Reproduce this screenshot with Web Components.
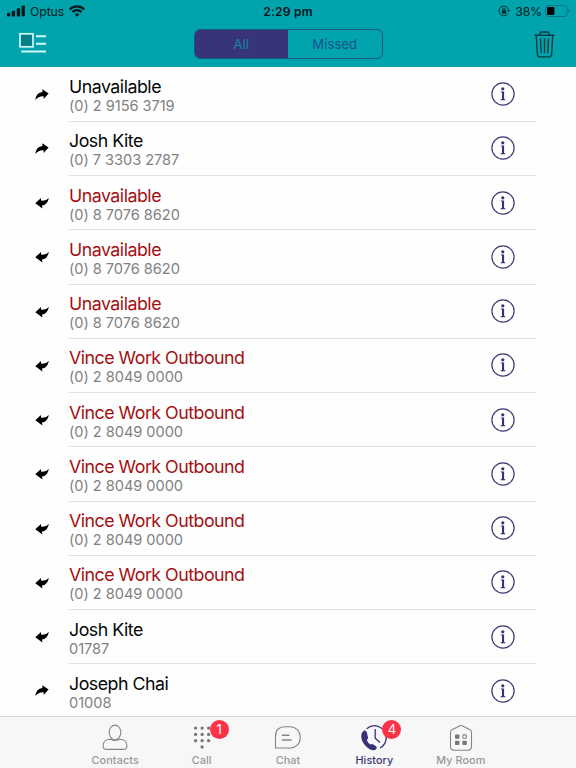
<!DOCTYPE html>
<html lang="en">
<head>
<meta charset="utf-8">
<title>Call history</title>
<style>
html, body { margin: 0; height: 100%; }
body { font-family: Inter, "Liberation Sans", sans-serif; background: #fefefe; overflow: hidden; }
</style>
</head>
<body>
<history-app></history-app>
<script>
const define = (name, render) => customElements.define(name, class extends HTMLElement {
  connectedCallback() {
    if (this.shadowRoot) return;
    this.attachShadow({ mode: 'open' }).innerHTML = render(this);
  }
});

define('status-bar', () => `<style>
:host { display: grid; grid-template-columns: 1fr auto 1fr; align-items: center; height: 22px; color: #001d22; }
.l, .r { display: flex; align-items: center; }
.l { padding-left: 7px; font-size: 12.2px; }
.l span { margin: 0 5px 0 5px; letter-spacing: -.05px; }
.t { font-size: 12px; font-weight: 600; color: #001418; letter-spacing: .25px; }
.r { justify-content: flex-end; padding-right: 6px; font-size: 12.2px; }
.r span { margin: 0 3px 0 5px; letter-spacing: -.1px; }
svg { display: block; }
</style>
<div class="l"><svg width="18" height="12" fill="#00171b"><rect x="0" y="7.8" width="3.3" height="3.7" rx="1"/><rect x="4.8" y="5.7" width="3.3" height="5.8" rx="1"/><rect x="9.8" y="3.2" width="3.3" height="8.3" rx="1"/><rect x="14.6" y=".5" width="3.3" height="11" rx="1"/></svg>
<span>Optus</span>
<svg width="16" height="12" viewBox="0 0 16 12" fill="none" stroke="#00171b" stroke-width="2.1"><path d="M.8 4.4a10.2 10.2 0 0 1 14.4 0M3.4 7a6.5 6.5 0 0 1 9.2 0"/><path d="M8 11.7 5.8 9.4a3.1 3.1 0 0 1 4.4 0z" fill="#00171b" stroke="none"/></svg></div>
<div class="t">2:29 pm</div>
<div class="r"><svg width="12" height="12" viewBox="0 0 12 12" fill="none" stroke="#003036" stroke-width="1"><path d="M1.1 7.2A4.8 4.8 0 0 1 10.6 4.8M10 8.6A4.8 4.8 0 0 1 1.6 8.2"/><path d="M9 5.2h3l-1.5 2z" fill="#003036" stroke="none"/><rect x="3.9" y="5.4" width="4.2" height="3.2" fill="#001d22" stroke="none"/><path d="M4.8 5.5V4.3a1.2 1.2 0 0 1 2.4 0v1.2"/></svg>
<span>38%</span>
<svg width="25" height="12" viewBox="0 0 25 12"><rect x=".5" y=".5" width="21.6" height="11" rx="3" fill="none" stroke="#077780"/><rect x="2" y="2" width="7.4" height="8" rx="1.2" fill="#000"/><path d="M23.4 4v4q1.4-.5 1.4-2t-1.4-2z" fill="#077780"/></svg></div>`);

define('segment-control', () => `<style>
:host { display: grid; grid-template-columns: 1fr 1fr; width: 189px; height: 30px; box-sizing: border-box; border: 1.3px solid #17588b; border-radius: 6px; overflow: hidden; }
::slotted(span) { display: flex; align-items: center; justify-content: center; color: #17548f; font-size: 13px; letter-spacing: .12px; }
::slotted(.on) { background: #373478; color: #1687a4; }
</style><slot></slot>`);

define('nav-header', () => `<style>
:host { display: flex; flex-direction: column; height: 67px; box-sizing: border-box; background: #01a3ad; border-bottom: 1px solid #0798a2; }
.bar { display: grid; grid-template-columns: 1fr auto 1fr; align-items: center; height: 44px; }
.bar svg { display: block; }
.menu { margin: -2px 0 0 19px; }
.trash { margin-left: auto; margin-right: 21px; }
</style>
<status-bar></status-bar>
<div class="bar">
<svg class="menu" width="28" height="22" viewBox="0 0 28 22"><rect x="1" y="1.8" width="13" height="13" fill="#087f88" stroke="#d0fbfc" stroke-width="1.7"/><path d="M17 4.2h10M17 11.8h10M2.2 19.6H27" stroke="#d0fbfc" stroke-width="2"/></svg>
<segment-control><span class="on">All</span><span>Missed</span></segment-control>
<svg class="trash" width="21" height="27" viewBox="0 0 21 27" fill="none" stroke="#083b40" stroke-width="1.35"><path d="M.6 4.2h19.8M6 4V2.6Q6 1 7.6 1h5.8Q15 1 15 2.6V4M2.2 4.4l1.2 19q.2 2.4 2.4 2.4h9.4q2.2 0 2.4-2.4l1.2-19M6.5 7.5l.7 14.8M10.5 7.5v14.8M14.5 7.5l-.7 14.8"/></svg>
</div>`);

define('call-row', el => {
  const missed = el.hasAttribute('missed');
  const outgoing = el.getAttribute('kind') === 'out';
  const arrow = outgoing
    ? '<path d="M.3 11Q1.2 3.7 7.4 3V.2L13.6 4.6 8.6 10V7.2Q3.4 6.9.3 11z"/>'
    : '<path d="M.3 6.3 6 .9V3.6Q10.9 4.3 13.9 1 12.4 8 7 8.6L7.4 11.4z"/>';
  return `<style>
:host { display: grid; grid-template-columns: 69px 1fr; height: 54.25px; width: 536px; }
.arrow { display: flex; align-items: center; padding-left: 35px; }
.body { display: flex; align-items: center; justify-content: space-between; border-bottom: 1px solid #e2e2e4; box-sizing: border-box; }
.text { padding-top: 3.6px; }
::slotted(b) { display: block; font-weight: 400; font-size: 17.8px; line-height: 20px; color: ${missed ? '#a50f12' : '#060606'}; white-space: nowrap; letter-spacing: -.5px; }
::slotted(i) { display: block; font-style: normal; font-size: 14.6px; line-height: 18px; color: #818183; white-space: nowrap; letter-spacing: -.04px; }
.info { margin-right: 21px; }
svg { display: block; }
</style>
<div class="arrow"><svg width="14" height="12" viewBox="0 0 14 12">${arrow}</svg></div>
<div class="body"><div class="text"><slot></slot></div>
<svg class="info" width="24" height="24" viewBox="0 0 24 24"><circle cx="12" cy="12" r="11.1" fill="none" stroke="#3d3974" stroke-width="1.2"/><circle cx="11.8" cy="6.8" r="1.6" fill="#353078"/><path d="M9.8 9.6h3.3v7.5l1.2.3v.8H9.6v-.8l1.4-.3v-6.6l-1.2-.3z" fill="#353078"/></svg></div>`;
});

const tabIcons = {
  contacts: '<ellipse cx="14" cy="8.4" rx="5.8" ry="7.3"/><path d="M9.7 15.3C3 15.6 2.1 18.4 2.1 22q0 3.4 3.6 3.4h16.6q3.6 0 3.6-3.4c0-3.6-.9-6.4-7.6-6.7Q14 17.7 9.7 15.3z"/>',
  call: '<g fill="#777" stroke="none">' + [[0,0],[1,0],[2,0],[0,1],[1,1],[2,1],[0,2],[1,2],[2,2],[1,3]].map(([x, y]) => `<circle cx="${7.6 + x * 6.5}" cy="${4.1 + y * 6.3}" r="1.65"/>`).join('') + '</g>',
  chat: '<path d="M1.5 24V12.6Q1.5 2.8 11.3 2.8h4.9a10 10 0 0 1 10 10v1.4a9.8 9.8 0 0 1-10 9.8z"/><path d="M7.8 11.3h7.6M7.8 16h9.7" stroke-width="1.4"/>',
  history: '<path d="M6.6 4.8Q13.5-.8 20.4 3.5A11.8 11.8 0 0 1 20 24M15.2 5v9.2l4.8 4.2" stroke="#38327a" stroke-width="1.3"/><path d="M4 6.6Q1.3 8.3 1.2 12.2C1.6 19 7 25 13 26.3q2 .2 3.5-1.6.9-1.2-.5-2.4l-2.7-1.9q-1.3-.8-2.7.2-2.8-1.4-3.9-4.9 1.8-1 1.3-2.5L6.7 8Q6 6 4 6.6z" fill="#38327a" stroke="none"/>',
  room: '<path d="M3.5 8.2Q3.5 6.6 5 5.8L12.8 1.8q1.2-.6 2.4 0L23 5.8q1.5.8 1.5 2.4V22.6q0 3.6-3.6 3.6H7.1q-3.6 0-3.6-3.6z"/><g fill="#777" stroke="none"><rect x="8" y="10.4" width="4.4" height="4.4" rx=".8"/><rect x="8" y="16.7" width="4.4" height="4.4" rx=".8"/><rect x="15.4" y="16.7" width="4.4" height="4.4" rx=".8"/></g><rect x="15.9" y="10.9" width="3.4" height="3.4" rx=".5"/>'
};

define('tab-item', el => {
  const active = el.hasAttribute('active');
  const badge = el.getAttribute('badge');
  return `<style>
:host { display: flex; flex-direction: column; align-items: center; width: 86.4px; padding-top: 7px; box-sizing: border-box; color: ${active ? '#3a3479' : '#98989a'}; font-size: 10.8px; font-weight: 500; }
.icon { position: relative; width: 28px; height: 28px; }
.badge { position: absolute; left: 22px; top: -4px; width: 19px; height: 19px; border-radius: 50%; background: #fc3246; color: #fff; font-size: 13px; font-weight: 400; line-height: 19px; text-align: center; }
.label { line-height: 14px; margin-top: 2px; letter-spacing: .1px; white-space: nowrap; }
svg { display: block; }
</style>
<div class="icon"><svg width="28" height="28" viewBox="0 0 28 28" fill="none" stroke="#858587" stroke-width="1.1">${tabIcons[el.getAttribute('icon')]}</svg>${badge ? `<div class="badge">${badge}</div>` : ''}</div>
<div class="label"><slot></slot></div>`;
});

define('tab-bar', () => `<style>
:host { display: flex; justify-content: center; height: 52px; box-sizing: border-box; border-top: 1px solid #dadadc; background: #f7f7f7; }
</style><slot></slot>`);

const calls = [
  ['Unavailable', '(0) 2 9156 3719', 'out'],
  ['Josh Kite', '(0) 7 3303 2787', 'out'],
  ...Array(3).fill(['Unavailable', '(0) 8 7076 8620', 'in', 1]),
  ...Array(5).fill(['Vince Work Outbound', '(0) 2 8049 0000', 'in', 1]),
  ['Josh Kite', '01787', 'in'],
  ['Joseph Chai', '01008', 'out']
];

define('history-app', () => `<style>
:host { display: grid; grid-template-rows: 67px 1fr 52px; height: 768px; width: 576px; overflow: hidden; }
main { overflow: hidden; min-height: 0; padding-top: .6px; }
</style>
<nav-header></nav-header>
<main>${calls.map(([n, t, k, m]) => `<call-row kind="${k}"${m ? ' missed' : ''}><b>${n}</b><i>${t}</i></call-row>`).join('')}</main>
<tab-bar><tab-item icon="contacts">Contacts</tab-item><tab-item icon="call" badge="1">Call</tab-item><tab-item icon="chat">Chat</tab-item><tab-item icon="history" badge="4" active>History</tab-item><tab-item icon="room">My Room</tab-item></tab-bar>`);
</script>
</body>
</html>
